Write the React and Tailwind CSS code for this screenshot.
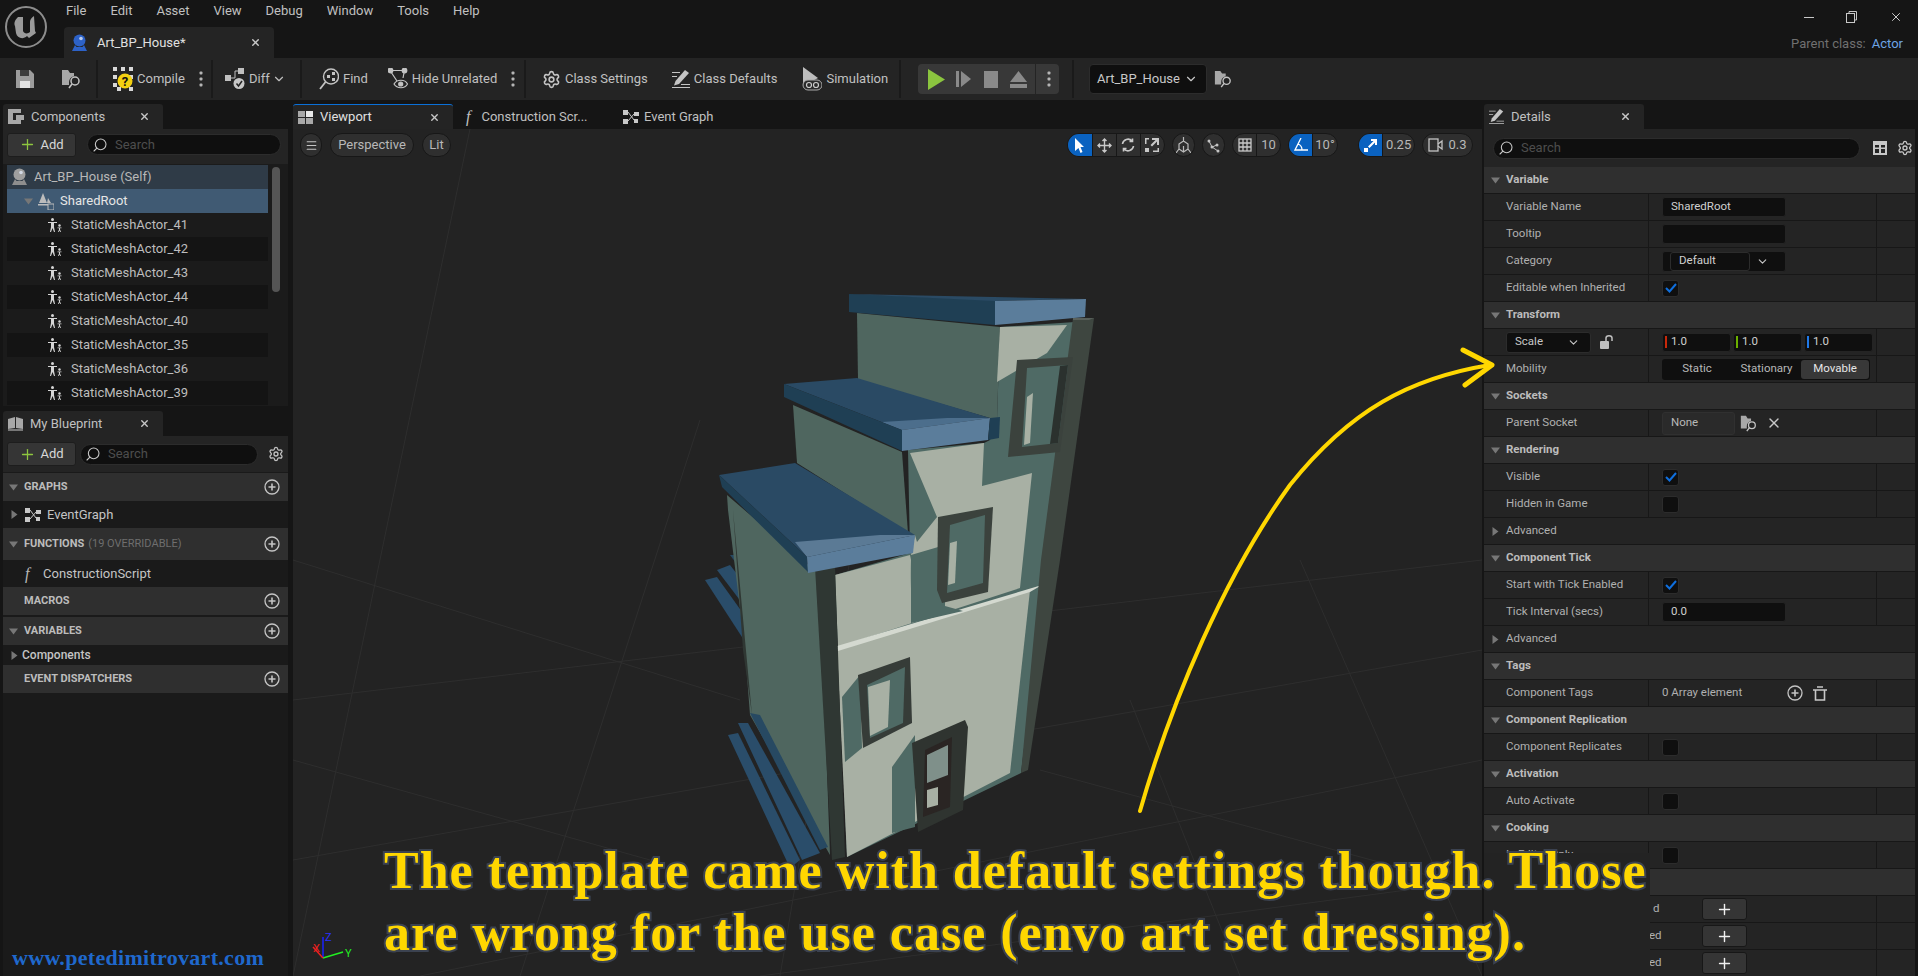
import React from "react";
import { Settings, Plus, X, ChevronDown, Search, Menu } from "lucide-react";

const Poly = ({ p, f }) => <polygon points={p} fill={f} />;

const Tri = ({ open = true }) => (
  <svg width="9" height="9" viewBox="0 0 9 9" className="shrink-0">
    {open ? <polygon points="0,1.5 9,1.5 4.5,7.5" fill="#777" /> : <polygon points="1.5,0 7.5,4.5 1.5,9" fill="#777" />}
  </svg>
);

const Dots = () => (
  <svg width="4" height="16" viewBox="0 0 4 16" fill="#b5b5b5">
    <rect x="0.5" y="0.5" width="3" height="3" rx="1" />
    <rect x="0.5" y="6.5" width="3" height="3" rx="1" />
    <rect x="0.5" y="12.5" width="3" height="3" rx="1" />
  </svg>
);

const Sep = () => <div className="w-[2px] h-[38px] bg-[#1a1a1a] shrink-0" />;

const UeLogo = () => (
  <svg width="44" height="44" viewBox="0 0 44 44">
    <circle cx="22" cy="22" r="20" fill="#161616" stroke="#8d8d8d" strokeWidth="2" />
    <path d="M14 12 C10 16 10 19 11 21 L12 28 C13 33 19 35 23 31 L25 33 L32 28 L31 26 L30 11 C27 13 26 15 26 17 L26 27 C24 29 20 29 19 26 L19 12 C17 12 15 12 14 12Z" fill="#9a9a9a" />
  </svg>
);

const BlueprintIcon = ({ c = "#2d62c8", b = "#2d62c8" }) => (
  <svg width="17" height="18" viewBox="0 0 17 18">
    <circle cx="8.5" cy="6.5" r="6" fill={c} />
    <path d="M4 11 L1 17 H16 L13 11 L11.5 13 H5.5Z" fill={b} />
    <circle cx="10" cy="4.5" r="1.8" fill="#dfe6f5" opacity="0.8" />
  </svg>
);

const SaveIcon = () => (
  <svg width="18" height="18" viewBox="0 0 18 18">
    <path d="M0 0 H14 L18 4 V18 H0Z" fill="#9c9c9c" />
    <rect x="4" y="0" width="9" height="6" fill="#3d3d3d" />
    <rect x="4" y="11" width="10" height="7" fill="#e3e3e3" />
  </svg>
);

const BrowseIcon = ({ s = 20 }) => (
  <svg width={s} height={s} viewBox="0 0 20 20">
    <path d="M1 1 H7 L9 4 H13 V7 C10 8 8 10 8 13 V16 H1Z" fill="#a8a8a8" />
    <circle cx="14" cy="12" r="4" fill="none" stroke="#c4c4c4" strokeWidth="1.5" />
    <path d="M11 15 L8 19" stroke="#c4c4c4" strokeWidth="1.5" />
  </svg>
);

const CompileIcon = () => (
  <svg width="20" height="24" viewBox="0 0 20 24">
    <path d="M0 0h4v4H0zM8 0h4v4H8zM16 0h4v4h-4zM0 8h4v4H0zM16 8h4v4h-4zM0 16h4v4H0zM4 20h4v4H4zM16 20h4v4h-4z" fill="#d8d8d8" />
    <circle cx="12" cy="14" r="7.5" fill="#f3d011" />
    <text x="12" y="18.5" textAnchor="middle" fontSize="13" fontWeight="700" fontFamily="Roboto, sans-serif" fill="#111">?</text>
  </svg>
);

const DiffIcon = () => (
  <svg width="20" height="22" viewBox="0 0 20 22">
    <rect x="0" y="7" width="6" height="6" fill="#c0c0c0" />
    <rect x="13" y="0" width="6" height="6" fill="#c0c0c0" />
    <path d="M6 10 H10 V3 H13" stroke="#c0c0c0" fill="none" />
    <circle cx="14" cy="15.5" r="5.5" fill="#c8c8c8" />
    <path d="M11.5 15.5 L13.5 18 L17 13" stroke="#242424" strokeWidth="1.5" fill="none" />
  </svg>
);

const FindIcon = () => (
  <svg width="20" height="24" viewBox="0 0 20 24" fill="none" stroke="#c4c4c4" strokeWidth="1.4">
    <circle cx="12" cy="9.5" r="7.5" />
    <path d="M6.5 15 L1 22" strokeWidth="1.8" />
    <rect x="8" y="8" width="3" height="3" fill="#c4c4c4" stroke="none" />
    <rect x="13" y="5" width="3" height="3" fill="#c4c4c4" stroke="none" />
    <rect x="13" y="11" width="3" height="3" fill="#c4c4c4" stroke="none" />
  </svg>
);

const HideIcon = () => (
  <svg width="20" height="22" viewBox="0 0 20 22" fill="none" stroke="#c4c4c4" strokeWidth="1.2">
    <circle cx="2.5" cy="2.5" r="2.3" fill="#c4c4c4" />
    <circle cx="16.5" cy="2.5" r="2.3" fill="#c4c4c4" />
    <path d="M4 2.5 H15 M3 4 L9 13 M16 5 L15 10" />
    <path d="M6 16 C9 11 17 11 19.5 16 C17 21 9 21 6 16Z" />
    <circle cx="12.7" cy="16" r="2" fill="#c4c4c4" />
  </svg>
);

const PencilIcon = ({ s = 18 }) => (
  <svg width={s} height={s} viewBox="0 0 18 18" fill="#c4c4c4">
    <path d="M13 0 L17 3 L7 14 L2 15.5 L3.5 11Z" />
    <path d="M0 2 H8 V3 H0Z M0 6 H5 V7 H0Z M9 14 H18 V15 H9Z M0 17 H18 V18 H0Z" />
  </svg>
);

const SimIcon = () => (
  <svg width="20" height="24" viewBox="0 0 20 24">
    <path d="M1 0 L16 11 L1 19Z" fill="#bdbdbd" />
    <rect x="1" y="13" width="19" height="10" rx="5" fill="#2a2a2a" stroke="#aaa" />
    <circle cx="7" cy="18" r="2.5" fill="none" stroke="#ccc" strokeWidth="1.2" />
    <circle cx="14" cy="18" r="2.5" fill="none" stroke="#ccc" strokeWidth="1.2" />
  </svg>
);

const ActorIcon = () => (
  <svg width="14" height="14" viewBox="0 0 14 14" fill="#d6d6d6" className="shrink-0">
    <circle cx="4.5" cy="1.5" r="1.5" />
    <path d="M0 4 H9 V5 H6 V9 L7 14 H6 L4.5 10 L3 14 H2 L3 9 V5 H0Z" />
    <circle cx="11.5" cy="7.5" r="1.2" />
    <path d="M9.5 9.5 H13.5 V10.3 H12 V11.5 L13 14 H12.2 L11.5 12.5 L10.8 14 H10 L11 11.5 V10.3 H9.5Z" />
  </svg>
);

const CircleAdd = () => (
  <svg width="16" height="16" viewBox="0 0 16 16" fill="none" stroke="#c4c4c4" strokeWidth="1.3" className="shrink-0">
    <circle cx="8" cy="8" r="7" />
    <path d="M4.5 8 H11.5 M8 4.5 V11.5" strokeWidth="1.6" />
  </svg>
);

const GraphIcon = () => (
  <svg width="16" height="14" viewBox="0 0 16 14" fill="#c8c8c8" className="shrink-0">
    <rect x="0" y="0" width="5" height="5" />
    <rect x="11" y="2" width="5" height="4" />
    <rect x="0" y="9" width="5" height="5" />
    <rect x="11" y="9" width="4" height="4" />
    <path d="M5 2 L11 10 M5 11 L11 4" stroke="#c8c8c8" fill="none" />
  </svg>
);

const SearchBox = ({ w, h = "h-[21px]" }) => (
  <div className={`${w} ${h} rounded-full bg-[#0f0f0f] border border-[#2c2c2c] flex items-center pl-[4px] gap-[7px] text-[13px] text-[#4d4d4d]`}>
    <Search size={16} strokeWidth={1.6} color="#c8c8c8" className="-scale-x-100" />
    Search
  </div>
);

const AddButton = () => (
  <div className="w-[69px] h-[24px] rounded-[3px] bg-[#353535] border border-[#1d1d1d] flex items-center justify-center gap-[4px] text-[13px] text-[#d8d8d8]">
    <Plus size={17} strokeWidth={1.8} color="#8ec63f" />
    Add
  </div>
);

const PanelTab = ({ icon, label, closeAt = "ml-auto" }) => (
  <div className="w-[160px] h-[25px] rounded-t-[3px] bg-[#242424] flex items-center pl-[5px] pr-[13px] text-[13px] text-[#c0c0c0] gap-[7px]">
    {icon}
    {label}
    <X size={11} strokeWidth={3} color="#c8c8c8" className={closeAt} />
  </div>
);

const actors = ["41", "42", "43", "44", "40", "35", "36", "39"];

function LeftColumn() {
  return (
    <div className="w-[293px] shrink-0 pl-[3px] pr-[5px] flex flex-col">
      <div className="h-[29px] pt-[4px]">
        <PanelTab
          label="Components"
          icon={
            <svg width="16" height="15" viewBox="0 0 16 15" fill="#a8a8a8">
              <path d="M0 0 H13 V4 H5 V11 H13 V15 H0Z" />
              <rect x="8" y="6" width="8" height="5" />
            </svg>
          }
        />
      </div>
      <div className="h-[277px] bg-[#242424] flex flex-col">
        <div className="h-[35px] flex items-center pl-[4px] gap-[11px] shrink-0 bg-[#242424] pb-[4px]">
          <AddButton />
          <SearchBox w="w-[194px]" />
        </div>
        <div className="flex-1 relative bg-[#1b1b1b] pl-[4px] pt-[1px] overflow-hidden">
          <div className="w-[261px] h-[24px] bg-[#2f3b47] flex items-center pl-[4px] gap-[6px] text-[13px] text-[#b8b8b8]">
            <BlueprintIcon c="#9e9e9e" b="#8e8e8e" />
            Art_BP_House (Self)
          </div>
          <div className="w-[261px] h-[24px] bg-[#405a73] flex items-center pl-[17px] gap-[5px] text-[13px] text-[#e6e6e6]">
            <Tri />
            <svg width="16" height="18" viewBox="0 0 16 18" fill="#bcbcbc">
              <path d="M5 1 L9 11 H1Z M0 12 H10 V13.5 H0Z M10 6 L13 11 H9Z" />
              <rect x="10" y="12" width="6" height="6" fill="none" stroke="#bcbcbc" />
            </svg>
            <span className="ml-[1px]">SharedRoot</span>
          </div>
          {actors.map((n, i) => (
            <div key={n} className={`w-[261px] h-[24px] flex items-center pl-[41px] gap-[5px] text-[13px] text-[#bdbdbd] ${i % 2 ? "bg-[#141414]" : "bg-[#1b1b1b]"}`}>
              <ActorIcon />
              <span className="ml-[4px]">StaticMeshActor_{n}</span>
            </div>
          ))}
          <div className="absolute left-[269px] top-[3px] w-[8px] h-[125px] rounded-full bg-[#555555]" />
        </div>
      </div>
      <div className="h-[30px] pt-[5px]">
        <PanelTab
          label="My Blueprint"
          icon={
            <svg width="15" height="14" viewBox="0 0 15 14" fill="#a8a8a8">
              <path d="M0 2 L7 0 V11 L0 12Z M8 0 L15 2 V12 L8 11Z" />
              <rect x="0" y="12" width="15" height="2" fill="#777" />
            </svg>
          }
        />
      </div>
      <div className="flex-1 bg-[#1a1a1a] flex flex-col">
        <div className="h-[36px] bg-[#242424] flex items-center pl-[4px] gap-[4px] shrink-0 mb-[1px]">
          <AddButton />
          <SearchBox w="w-[178px]" />
          <Settings size={16} color="#c0c0c0" className="ml-[6px]" />
        </div>
        <SectionHead h="h-[28px]" label="GRAPHS" open />
        <div className="h-[27px] flex items-center pl-[7px] gap-[6px] text-[13px] text-[#c4c4c4]">
          <Tri open={false} />
          <GraphIcon />
          EventGraph
        </div>
        <SectionHead h="h-[32px]" label="FUNCTIONS" extra="(19 OVERRIDABLE)" open />
        <div className="h-[27px] flex items-center pl-[22px] gap-[2px] text-[13px] text-[#c4c4c4]">
          <span className="font-['Liberation_Serif',serif] italic text-[16px] text-[#b8b8b8] w-[16px]">f</span>
          ConstructionScript
        </div>
        <SectionHead h="h-[28px]" label="MACROS" />
        <div className="h-[2px]" />
        <SectionHead h="h-[28px]" label="VARIABLES" open />
        <div className="h-[20px] flex items-center pl-[7px] gap-[3px] text-[12px] font-medium text-[#c4c4c4]">
          <Tri open={false} />
          Components
        </div>
        <SectionHead h="h-[28px]" label="EVENT DISPATCHERS" />
      </div>
    </div>
  );
}

function SectionHead({ h, label, extra, open }) {
  return (
    <div className={`${h} shrink-0 bg-[#2f2f2f] flex items-center pl-[6px] pr-[8px] text-[11px] font-bold text-[#bcbcbc]`}>
      <div className="w-[13px]">{open && <Tri />}</div>
      <span className="ml-[2px]">{label}</span>
      {extra && <span className="ml-[4px] font-normal text-[#6e6e6e]">{extra}</span>}
      <div className="ml-auto"><CircleAdd /></div>
    </div>
  );
}

function ToolItem({ children, label, cls = "" }) {
  return (
    <div className={`flex items-center gap-[4px] text-[13px] text-[#c0c0c0] ${cls}`}>
      {children}
      {label}
    </div>
  );
}

function Toolbar() {
  return (
    <div className="h-[42px] shrink-0 bg-[#242424] flex items-center">
      <div className="w-[96px] flex items-center pl-[16px] gap-[27px]">
        <SaveIcon />
        <BrowseIcon />
      </div>
      <Sep />
      <div className="w-[113px] flex items-center pl-[15px]">
        <ToolItem label="Compile"><CompileIcon /></ToolItem>
        <div className="ml-[14px]"><Dots /></div>
      </div>
      <Sep />
      <div className="w-[87px] flex items-center pl-[12px]">
        <ToolItem label="Diff"><DiffIcon /></ToolItem>
        <ChevronDown size={14} color="#c0c0c0" className="ml-[2px]" />
      </div>
      <Sep />
      <div className="w-[222px] flex items-center pl-[17px]">
        <ToolItem label="Find"><FindIcon /></ToolItem>
        <ToolItem label="Hide Unrelated" cls="ml-[20px]"><HideIcon /></ToolItem>
        <div className="ml-[14px]"><Dots /></div>
      </div>
      <Sep />
      <div className="w-[373px] flex items-center pl-[16px]">
        <ToolItem label="Class Settings"><Settings size={19} color="#c4c4c4" /></ToolItem>
        <ToolItem label="Class Defaults" cls="ml-[24px]"><PencilIcon /></ToolItem>
        <ToolItem label="Simulation" cls="ml-[25px]"><SimIcon /></ToolItem>
      </div>
      <Sep />
      <div className="ml-[17px] w-[141px] h-[30px] rounded-[4px] bg-[#383838] flex items-center pl-[10px]">
        <svg width="17" height="21" viewBox="0 0 17 21"><polygon points="0,0 17,10.5 0,21" fill="#8bc53f" /></svg>
        <svg width="16" height="16" viewBox="0 0 16 16" className="ml-[11px]" fill="#8a8a8a">
          <rect x="0" y="0" width="3" height="16" />
          <polygon points="5,0 15,8 5,16" />
        </svg>
        <svg width="14" height="17" className="ml-[12px]"><rect width="14" height="17" fill="#8a8a8a" /></svg>
        <svg width="17" height="17" viewBox="0 0 17 17" className="ml-[12px]" fill="#8a8a8a">
          <polygon points="8.5,0 17,11 0,11" />
          <rect x="0" y="13" width="17" height="4" />
        </svg>
        <div className="ml-[8px] h-[30px] w-[1px] bg-[#242424]" />
        <div className="ml-[11px]"><Dots /></div>
      </div>
      <div className="ml-[13px]"><Sep /></div>
      <div className="ml-[15px] w-[118px] h-[30px] rounded-[4px] bg-[#0f0f0f] border border-[#2c2c2c] flex items-center pl-[7px] gap-[4px] text-[13px] text-[#c8c8c8]">
        Art_BP_House
        <ChevronDown size={14} color="#c8c8c8" />
      </div>
      <div className="ml-[7px]"><BrowseIcon s={18} /></div>
    </div>
  );
}

const Pill = ({ children, cls = "" }) => (
  <div className={`h-[24px] rounded-full bg-[#2f2f2f] border border-[#171717] flex items-center justify-center text-[13px] text-[#b8b8b8] overflow-hidden shrink-0 ${cls}`}>
    {children}
  </div>
);

const Seg = ({ children, blue, cls = "" }) => (
  <div className={`h-full flex items-center justify-center border-r border-[#171717] last:border-r-0 ${blue ? "bg-[#0a62c0] text-white" : ""} ${cls}`}>
    {children}
  </div>
);

function Grid() {
  const lines = [
    "293,700 1482,560", "293,860 1482,650", "420,976 1482,760", "760,976 1482,880",
    "470,129 293,976", "700,420 520,976", "860,500 780,976", "1300,560 1482,976",
    "1130,700 1240,976", "293,560 740,700", "293,760 650,860", "1040,770 1482,890",
  ];
  return (
    <g stroke="#2e2e2e" strokeWidth="1">
      {lines.map((l) => {
        const [a, b] = l.split(" ");
        const [x1, y1] = a.split(",");
        const [x2, y2] = b.split(",");
        return <line key={l} x1={x1} y1={y1} x2={x2} y2={y2} />;
      })}
    </g>
  );
}

const SIDE = "#4f665f";
const LIT = "#a8b0a4";
const SHADE = "#4f6a65";
const ROOF = "#2a4a64";
const ROOFD = "#1f3f54";
const ROOFL = "#5b7d9b";
const FRAME = "#3b423d";

function House() {
  return (
    <svg className="absolute inset-0" width="1189" height="847" viewBox="293 129 1189 847">
      <Grid />
      {/* back awnings */}
      <Poly p="730,555 742,555 818,648 807,659" f="#274962" />
      <Poly p="717,570 730,565 810,668 795,673" f="#2a4d6a" />
      <Poly p="705,580 717,577 793,683 773,685" f="#2a4d6a" />
      <Poly p="777,686 792,686 792,696 778,696" f="#c8cdc4" />
      {/* side walls */}
      <Poly p="857,313 1000,327 997,420 858,380" f={SIDE} />
      <Poly p="793,405 902,452 908,533 797,463" f={SIDE} />
      <Poly p="727,495 820,575 830,855 750,715 745,650 728,510" f={SIDE} />
      <Poly p="733,510 745,640 752,715 743,650" f="#2f3733" />
      {/* front wall in shade */}
      <Poly p="1000,327 1075,322 1021,773 847,857 835,575 910,553 908,450 984,443 990,440 997,420" f={SHADE} />
      {/* lit parts */}
      <Poly p="1000,327 1067,325 1047,353 997,382" f={LIT} />
      <Poly p="910,453 984,443 982,486 1032,473 1020,588 912,623 910,560 915,535 917,542 937,517" f={LIT} />
      <Poly p="835,575 910,555 912,623 838,647" f={LIT} />
      <Poly p="837,648 1030,590 1010,773 847,857" f={LIT} />
      <Poly p="837,646 1042,585 1030,592 838,651" f="#d4d9d0" />
      <Poly p="911,623 911,555 945,545 945,606 963,611" f={SHADE} />
      <Poly p="842,697 860,675 862,748 845,762" f={SHADE} />
      <Poly p="892,767 915,735 915,827 892,833" f={SHADE} />
      {/* pillars */}
      <Poly p="1073,318 1094,318 1060,560 1028,770 1021,773 1041,560" f="#3e4640" />
      <Poly p="1073,318 1094,318 1089,320 1073,320" f="#59605a" />
      <Poly p="815,567 835,565 845,857 832,860" f="#2f3733" />
      <Poly p="815,567 823,562 835,565 825,569" f="#4a514d" />
      {/* top roof */}
      <Poly p="849,294 995,300 995,325 849,312" f={ROOFD} />
      <Poly p="849,294 1086,299 995,301" f={ROOF} />
      <Poly p="995,301 1086,299 1085,317 995,325" f={ROOFL} />
      {/* middle roof */}
      <Poly p="784,384 857,378 990,418 902,430" f={ROOF} />
      <Poly p="882,422 947,418 990,418 902,430" f="#4c6e8c" />
      <Poly p="784,384 902,430 902,451 784,397" f={ROOFD} />
      <Poly p="902,430 990,418 988,440 902,451" f={ROOFL} />
      <Poly p="990,418 1000,417 999,438 988,440" f={ROOFD} />
      {/* lower roof */}
      <Poly p="719,475 795,463 915,535 807,557" f={ROOF} />
      <Poly p="795,542 880,535 915,535 807,557" f="#5b7a95" />
      <Poly p="719,475 807,557 808,572 722,487" f={ROOFD} />
      <Poly p="807,557 915,535 913,553 808,573" f={ROOFL} />
      {/* windows */}
      <Poly p="1017,360 1073,357 1060,452 1008,457" f={FRAME} />
      <Poly p="1027,368 1068,365 1058,443 1022,447" f={SHADE} />
      <Poly p="1027,397 1033,393 1030,443 1024,445" f={LIT} />
      <Poly p="1060,366 1068,365 1058,443 1050,444" f="#2b312e" />
      <Poly p="938,517 993,507 988,592 942,603 937,590" f={FRAME} />
      <Poly p="950,525 985,515 983,583 947,593" f={SHADE} />
      <Poly p="950,543 957,541 955,583 948,585" f={LIT} />
      <Poly p="858,675 910,657 912,723 863,748" f="#363c38" />
      <Poly p="867,685 905,667 903,723 870,738" f={SHADE} />
      <Poly p="868,687 890,680 888,727 870,736" f={LIT} />
      {/* door */}
      <Poly p="912,743 965,720 968,727 963,810 918,832" f="#2f3430" />
      <Poly p="925,750 952,737 950,807 923,817" f="#2a2523" />
      <Poly p="927,755 948,745 948,775 927,783" f="#7f908a" />
      <Poly p="927,790 938,787 938,805 927,808" f={LIT} />
      {/* front awnings */}
      <Poly p="750,713 760,715 828,847 820,850" f="#274962" />
      <Poly p="738,723 748,723 820,853 802,860" f="#2a4d6a" />
      <Poly p="728,735 738,733 800,860 790,868" f="#2a4d6a" />
      {/* axis widget */}
      <path d="M323 958 L323 937" stroke="#1a22ff" strokeWidth="1.5" />
      <path d="M323 958 L343 952" stroke="#22ee22" strokeWidth="1.5" />
      <path d="M323 958 L313 947" stroke="#ee2020" strokeWidth="1.5" />
      <text x="325" y="941" fill="#2a30ff" fontSize="11" fontFamily="Roboto, sans-serif">Z</text>
      <text x="345" y="957" fill="#22ee22" fontSize="11" fontFamily="Roboto, sans-serif">Y</text>
      <text x="313" y="952" fill="#ee2020" fontSize="11" fontFamily="Roboto, sans-serif">X</text>
    </svg>
  );
}

function Viewport() {
  return (
    <div className="w-[1189px] shrink-0 flex flex-col">
      <div className="h-[29px] pt-[4px] flex text-[13px] text-[#c0c0c0]">
        <div className="w-[160px] h-[25px] rounded-t-[3px] bg-[#242424] border-t border-[#0a70d8] flex items-center pl-[5px] pr-[13px] gap-[7px] text-[#e0e0e0]">
          <svg width="15" height="13" viewBox="0 0 15 13" fill="#a8a8a8">
            <rect x="0" y="0" width="7" height="6" />
            <rect x="8" y="0" width="7" height="6" fill="#e8e8e8" />
            <rect x="0" y="7" width="7" height="6" />
            <rect x="8" y="7" width="7" height="6" />
          </svg>
          Viewport
          <X size={11} strokeWidth={3} color="#c8c8c8" className="ml-auto" />
        </div>
        <div className="flex items-center w-[170px] pl-[13px] gap-[11px]">
          <span className="font-['Liberation_Serif',serif] italic text-[16px]">f</span>
          Construction Scr...
        </div>
        <div className="flex items-center gap-[5px]">
          <GraphIcon />
          Event Graph
        </div>
      </div>
      <div className="flex-1 relative bg-[#232323] overflow-hidden">
        <House />
        <div className="relative flex items-center h-[30px] pt-[2px] pl-[7px] gap-[8px]">
          <Pill cls="w-[22px]"><Menu size={13} color="#c4c4c4" /></Pill>
          <Pill cls="w-[84px]">Perspective</Pill>
          <Pill cls="w-[29px]">Lit</Pill>
          <div className="ml-auto flex items-center gap-[7px] pr-[9px]">
            <Pill cls="w-[98px]">
              <Seg blue cls="w-[25px]">
                <svg width="11" height="15" viewBox="0 0 11 15"><path d="M1 0 L10 9 H6.5 L8.5 14 L6.5 15 L4.5 10 L1 13Z" fill="#fff" /></svg>
              </Seg>
              <Seg cls="w-[25px]">
                <svg width="15" height="15" viewBox="0 0 15 15" fill="none" stroke="#c8c8c8" strokeWidth="1.4"><path d="M7.5 1 V14 M1 7.5 H14 M5.5 3 L7.5 1 L9.5 3 M5.5 12 L7.5 14 L9.5 12 M3 5.5 L1 7.5 L3 9.5 M12 5.5 L14 7.5 L12 9.5" /></svg>
              </Seg>
              <Seg cls="w-[24px]">
                <svg width="14" height="14" viewBox="0 0 14 14" fill="none" stroke="#c8c8c8" strokeWidth="1.6"><path d="M1.5 6 A5.5 5.5 0 0 1 11 3 M12.5 8 A5.5 5.5 0 0 1 3 11 M11.5 0.5 V3.5 H8.5 M2.5 13.5 V10.5 H5.5" /></svg>
              </Seg>
              <Seg cls="w-[24px]">
                <svg width="14" height="14" viewBox="0 0 14 14" fill="#c8c8c8"><rect x="0" y="10" width="4" height="4" /><path d="M0 0 H4 V1.5 H1.5 V6 H0Z M7 0 H14 V7 H12 V3.5 L7 8.5 L5.5 7 L10.5 2 H7Z M14 10 V14 H8 V12.5 H12.5 V10Z" /></svg>
              </Seg>
            </Pill>
            <Pill cls="w-[23px]">
              <svg width="15" height="17" viewBox="0 0 15 17" fill="none" stroke="#bcbcbc" strokeWidth="1.2"><path d="M7.5 0 V4 M3 7 L7.5 4 L12 7 V12 L7.5 15 L3 12Z M7.5 9 V15 M3 12 L0 16 M12 12 L15 16" /></svg>
            </Pill>
            <Pill cls="w-[23px]">
              <svg width="15" height="15" viewBox="0 0 15 15" fill="#c4c4c4"><circle cx="3" cy="3" r="1.5" /><circle cx="6" cy="9" r="1.5" /><circle cx="11" cy="7" r="1.5" /><circle cx="12" cy="13" r="1.5" /><path d="M3 3 L6 9 L11 7 M6 9 L12 13" stroke="#c4c4c4" fill="none" /></svg>
            </Pill>
            <Pill cls="w-[49px]">
              <Seg cls="w-[25px]">
                <svg width="14" height="14" viewBox="0 0 14 14" fill="none" stroke="#c8c8c8" strokeWidth="1.3"><rect x="1" y="1" width="12" height="12" /><path d="M5 1 V13 M9 1 V13 M1 5 H13 M1 9 H13" /></svg>
              </Seg>
              <Seg cls="w-[24px]">10</Seg>
            </Pill>
            <Pill cls="w-[50px]">
              <Seg blue cls="w-[25px]">
                <svg width="14" height="14" viewBox="0 0 14 14" fill="none" stroke="#fff" strokeWidth="1.3"><path d="M7 0 L1 12 H14 M4 6 C7 7 8 9 8 12" /></svg>
              </Seg>
              <Seg cls="w-[25px]">10°</Seg>
            </Pill>
            <div className="w-[6px]" />
            <Pill cls="w-[57px]">
              <Seg blue cls="w-[25px]">
                <svg width="13" height="13" viewBox="0 0 13 13" fill="#fff"><rect x="0" y="9" width="4" height="4" /><path d="M7 0 H13 V6 H11 V3.5 L5.5 9 L4 7.5 L9.5 2 H7Z" /></svg>
              </Seg>
              <Seg cls="w-[32px]">0.25</Seg>
            </Pill>
            <Pill cls="w-[51px] gap-[5px]">
              <svg width="15" height="14" viewBox="0 0 15 14" fill="none" stroke="#c4c4c4" strokeWidth="1.3"><rect x="1" y="1" width="9" height="12" /><path d="M10 6 L14 3 V11 L10 8" /></svg>
              0.3
            </Pill>
          </div>
        </div>
      </div>
    </div>
  );
}

const Input = ({ v, w = "w-[124px]" }) => (
  <div className={`${w} h-[20px] rounded-[3px] bg-[#0f0f0f] border border-[#242424] flex items-center pl-[8px] text-[11.5px] text-[#d0d0d0]`}>{v}</div>
);

const Check = ({ on }) => (
  <div className="w-[17px] h-[17px] rounded-[3px] bg-[#0f0f0f] border border-[#2c2c2c] flex items-center justify-center">
    {on && <svg width="12" height="10" viewBox="0 0 12 10" fill="none" stroke="#0f6fde" strokeWidth="2"><path d="M1 5 L4.5 8.5 L11 1" /></svg>}
  </div>
);

const Head = ({ label }) => (
  <div className="h-[27px] bg-[#2f2f2f] border-b border-[#171717] flex items-center pl-[7px] gap-[6px] text-[11.5px] font-bold text-[#bcbcbc]">
    <Tri />
    {label}
  </div>
);

const Row = ({ label, labelNode, children }) => (
  <div className="h-[27px] flex border-b border-[#171717] text-[11.5px] text-[#b0b0b0]">
    <div className="w-[165px] shrink-0 pl-[22px] flex items-center border-r border-[#171717]">{labelNode || label}</div>
    <div className="w-[228px] shrink-0 pl-[13px] flex items-center border-r border-[#171717]">{children}</div>
  </div>
);

const Collapsed = ({ label }) => (
  <div className="h-[27px] border-b border-[#171717] flex items-center pl-[7px] gap-[6px] text-[11.5px] text-[#b0b0b0]">
    <Tri open={false} />
    {label}
  </div>
);

const AddSquare = () => (
  <div className="ml-[40px] w-[45px] h-[22px] rounded-[3px] bg-[#353535] border border-[#171717] flex items-center justify-center">
    <Plus size={17} strokeWidth={2} color="#f0f0f0" />
  </div>
);

const Vec = ({ c }) => (
  <div className="w-[69px] h-[19px] rounded-[3px] bg-[#0f0f0f] border border-[#242424] flex items-center pl-[2px] gap-[4px] text-[11.5px] text-[#d0d0d0]">
    <div className={`w-[2px] h-[12px] ${c}`} />
    1.0
  </div>
);

function Details() {
  return (
    <div className="w-[431px] shrink-0 ml-[2px] flex flex-col">
      <div className="h-[29px] pt-[4px]">
        <PanelTab label="Details" icon={<PencilIcon s={15} />} />
      </div>
      <div className="flex-1 bg-[#242424]">
        <div className="h-[38px] flex items-center pl-[9px]">
          <SearchBox w="w-[367px]" />
          <svg width="14" height="14" viewBox="0 0 14 14" fill="#c8c8c8" className="ml-[13px]">
            <path d="M0 0 H14 V14 H0Z M2 4 V6.5 H6 V4Z M8 4 V6.5 H12 V4Z M2 8 V12 H6 V8Z M8 8 V12 H12 V8Z" fillRule="evenodd" />
          </svg>
          <Settings size={16} color="#c8c8c8" className="ml-[10px]" />
        </div>
        <Head label="Variable" />
        <Row label="Variable Name"><Input v="SharedRoot" /></Row>
        <Row label="Tooltip"><Input v="" /></Row>
        <Row label="Category">
          <div className="w-[124px] h-[21px] rounded-[3px] bg-[#0f0f0f] border border-[#242424] flex items-center pl-[7px] pr-[16px] justify-between">
            <div className="w-[80px] h-[19px] rounded-[3px] border border-[#2c2c2c] pl-[8px] text-[#d0d0d0] flex items-center">Default</div>
            <ChevronDown size={13} color="#c8c8c8" />
          </div>
        </Row>
        <Row label="Editable when Inherited"><Check on /></Row>
        <Head label="Transform" />
        <Row
          labelNode={
            <div className="flex items-center">
              <div className="w-[85px] h-[21px] rounded-[3px] bg-[#0f0f0f] border border-[#2c2c2c] flex items-center justify-between pl-[8px] pr-[10px] text-[#c8c8c8]">
                Scale
                <ChevronDown size={13} color="#c8c8c8" />
              </div>
              <svg width="14" height="14" viewBox="0 0 14 14" fill="#c0c0c0" className="ml-[9px]">
                <rect x="0" y="6" width="9" height="8" rx="1" />
                <path d="M6 6 V3 C6 0 12 0 12 3 V6" fill="none" stroke="#c0c0c0" strokeWidth="1.5" />
              </svg>
            </div>
          }
        >
          <div className="flex gap-[2px]">
            <Vec c="bg-[#c8280a]" />
            <Vec c="bg-[#6cb000]" />
            <Vec c="bg-[#1f78e6]" />
          </div>
        </Row>
        <Row label="Mobility">
          <div className="w-[208px] h-[21px] rounded-[3px] bg-[#0f0f0f] flex items-center text-[#b8b8b8] text-center">
            <div className="w-[70px]">Static</div>
            <div className="w-[69px]">Stationary</div>
            <div className="w-[68px] h-[19px] rounded-[3px] bg-[#383838] text-[#e6e6e6] flex items-center justify-center">Movable</div>
          </div>
        </Row>
        <Head label="Sockets" />
        <Row label="Parent Socket">
          <div className="w-[73px] h-[23px] rounded-[3px] bg-[#2a2a2a] border border-[#303030] pl-[8px] text-[#b8b8b8] flex items-center">None</div>
          <div className="ml-[5px]"><BrowseIcon s={17} /></div>
          <X size={16} strokeWidth={2} color="#c8c8c8" className="ml-[9px]" />
        </Row>
        <Head label="Rendering" />
        <Row label="Visible"><Check on /></Row>
        <Row label="Hidden in Game"><Check /></Row>
        <Collapsed label="Advanced" />
        <Head label="Component Tick" />
        <Row label="Start with Tick Enabled"><Check on /></Row>
        <Row label="Tick Interval (secs)"><Input v="0.0" /></Row>
        <Collapsed label="Advanced" />
        <Head label="Tags" />
        <Row label="Component Tags">
          <span>0 Array element</span>
          <div className="ml-[45px]"><CircleAdd /></div>
          <svg width="14" height="15" viewBox="0 0 14 15" fill="none" stroke="#c8c8c8" strokeWidth="1.6" className="ml-[10px]">
            <path d="M4 1 H10 M0 4 H14 M2.5 4 V14 H11.5 V4" />
          </svg>
        </Row>
        <Head label="Component Replication" />
        <Row label="Component Replicates"><Check /></Row>
        <Head label="Activation" />
        <Row label="Auto Activate"><Check /></Row>
        <Head label="Cooking" />
        <Row label="Is Editor Only"><Check /></Row>
        <Head label="Events" />
        <Row labelNode={<span className="ml-[147px]">d</span>}><AddSquare /></Row>
        <Row labelNode={<span className="ml-[143px]">ed</span>}><AddSquare /></Row>
        <Row labelNode={<span className="ml-[133px]">ated</span>}><AddSquare /></Row>
      </div>
    </div>
  );
}

export default function App() {
  return (
    <div className="relative w-[1918px] h-[976px] overflow-hidden bg-[#151515] flex flex-col font-[Roboto,sans-serif]">
      <div className="h-[58px] shrink-0 flex relative">
        <div className="w-[64px] shrink-0 pt-[5px] pl-[4px]"><UeLogo /></div>
        <div className="flex flex-col">
          <div className="h-[27px] pl-[2px] pb-[5px] flex items-center gap-[24px] text-[13px] text-[#c0c0c0]">
            {["File", "Edit", "Asset", "View", "Debug", "Window", "Tools", "Help"].map((m) => <span key={m}>{m}</span>)}
          </div>
          <div className="w-[210px] h-[31px] rounded-t-[4px] bg-[#242424] flex items-center pl-[7px] pr-[13px] gap-[9px] text-[13px] text-[#e0e0e0]">
            <BlueprintIcon />
            Art_BP_House*
            <X size={11} strokeWidth={3} color="#c8c8c8" className="ml-auto" />
          </div>
        </div>
        <div className="ml-auto flex flex-col items-end pr-[15px]">
          <div className="h-[34px] flex items-center gap-[32px] pr-[-3px]">
            <div className="w-[10px] h-[1px] bg-[#c8c8c8]" />
            <svg width="11" height="12" viewBox="0 0 11 12" fill="none" stroke="#c8c8c8"><rect x="0.5" y="2.5" width="8" height="9" /><path d="M3 2.5 V0.5 H10.5 V9 H8.5" /></svg>
            <X size={14} strokeWidth={1.6} color="#d8d8d8" />
          </div>
          <div className="text-[13px] text-[#707070] flex gap-[6px]">
            Parent class:
            <span className="text-[#6ea4e6]">Actor</span>
          </div>
        </div>
      </div>
      <Toolbar />
      <div className="flex-1 flex min-h-0">
        <LeftColumn />
        <Viewport />
        <Details />
      </div>

      {/* annotation painted over the screenshot */}
      <svg className="absolute inset-0 pointer-events-none" width="1918" height="976" viewBox="0 0 1918 976" fill="none" stroke="#ffd700" strokeLinecap="round" strokeLinejoin="round">
        <path d="M1140 811 C1172 700 1225 575 1290 485 C1350 410 1410 378 1490 365" strokeWidth="4" />
        <path d="M1463 350 L1492 365 L1465 385" strokeWidth="5" />
      </svg>
      <div className="absolute left-[1484px] top-[853px] w-[166px] h-[123px] bg-[#232323]" />
      <div className="absolute left-[384px] top-[840px] font-['Liberation_Serif',serif] font-bold text-[52px] leading-[62px] tracking-[1px] text-[#ffd700] whitespace-nowrap [-webkit-text-stroke:4px_#3b4250] [paint-order:stroke_fill]">
        <div>The template came with default settings though. Those</div>
        <div>are wrong for the use case (envo art set dressing).</div>
      </div>
      <div className="absolute left-[12px] top-[945px] font-['Liberation_Serif',serif] font-bold text-[22px] leading-[26px] tracking-[0.3px] text-[#1f68cc] whitespace-nowrap">
        www.petedimitrovart.com
      </div>
    </div>
  );
}
